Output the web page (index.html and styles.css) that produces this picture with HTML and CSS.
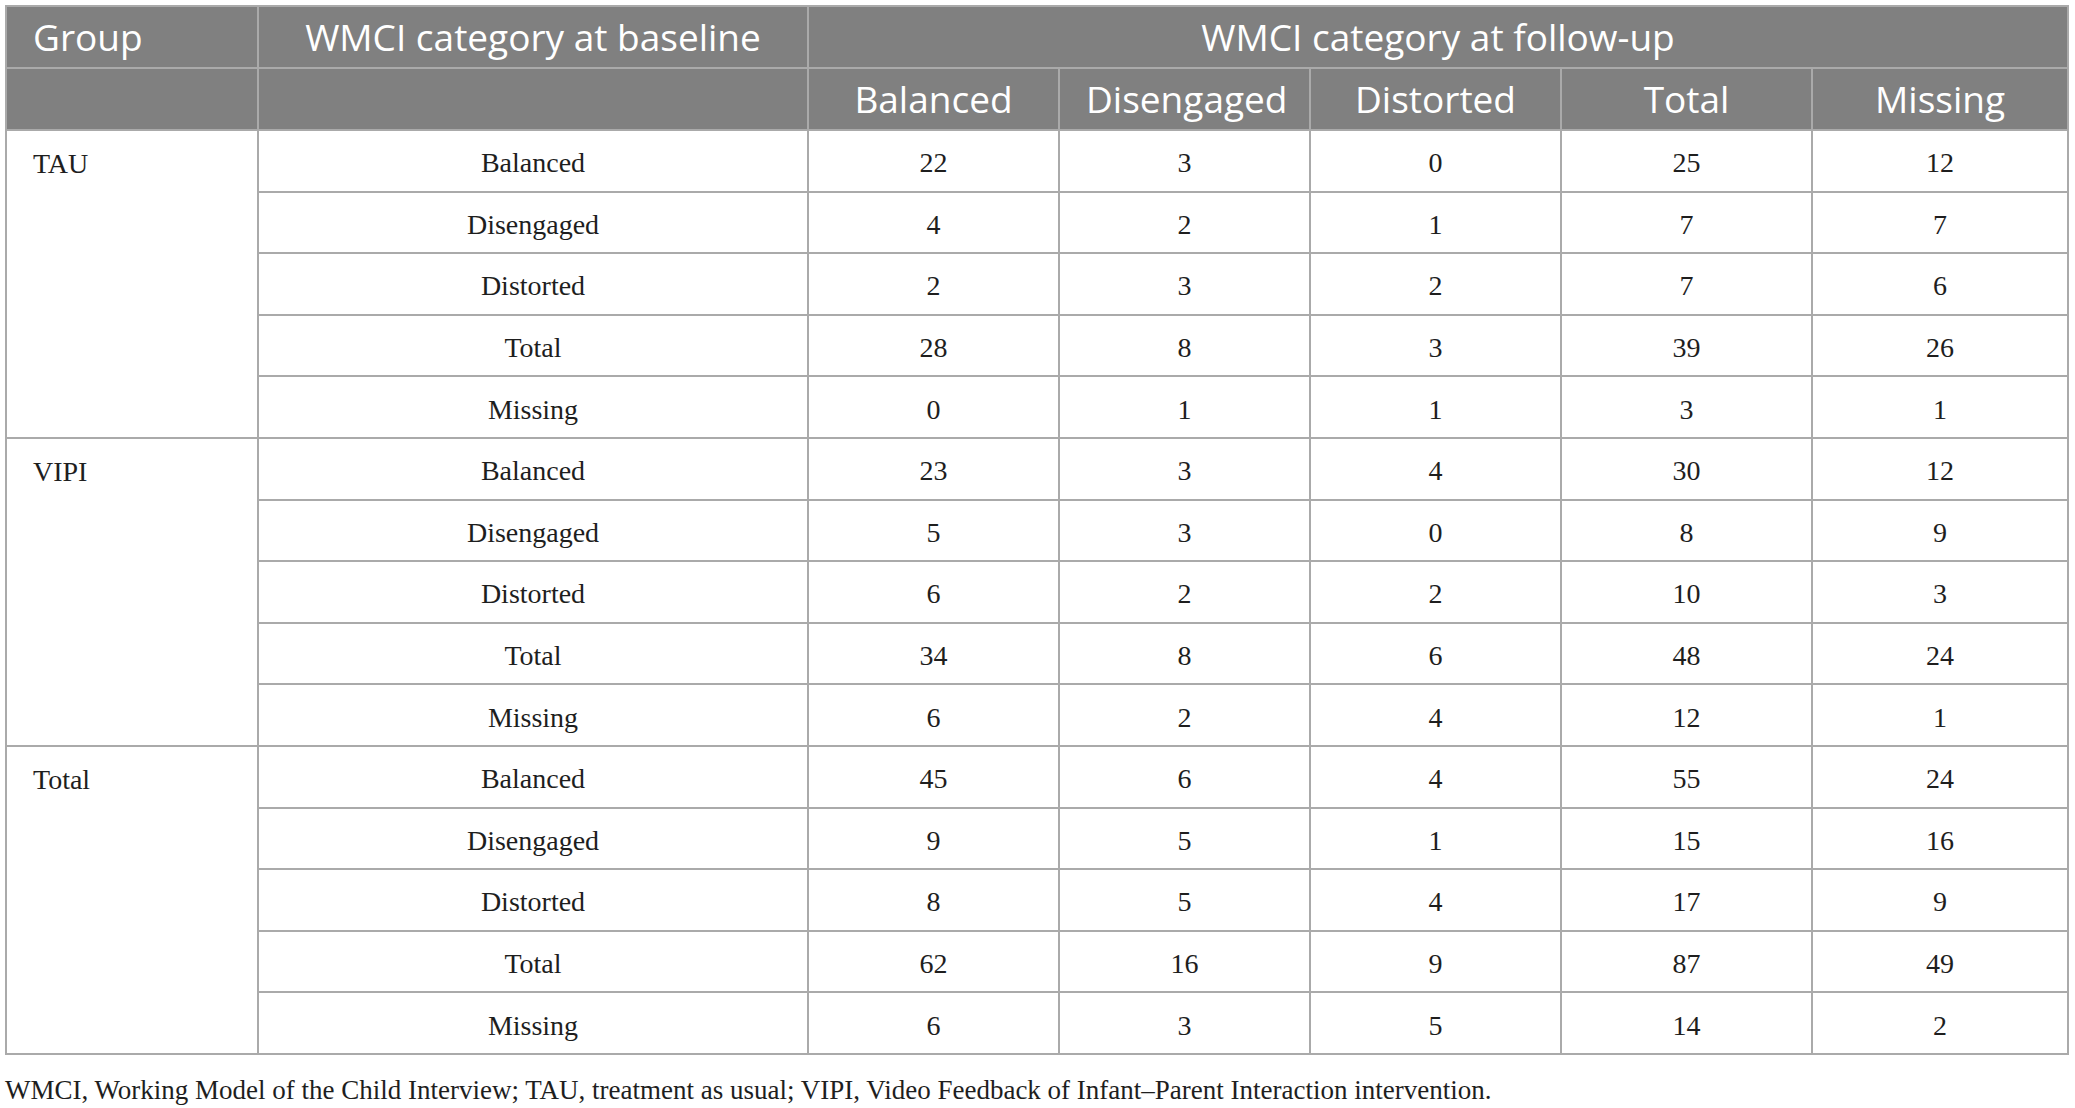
FILE: index.html
```html
<!DOCTYPE html>
<html lang="en">
<head>
<meta charset="UTF-8">
<meta name="viewport" content="width=device-width, initial-scale=1.0">
<title>WMCI categories</title>
<link rel="stylesheet" href="styles.css">
</head>
<body>

<table class="data-table">
    <colgroup>
        <col class="col-group">
        <col class="col-base">
        <col class="col-num">
        <col class="col-num">
        <col class="col-num">
        <col class="col-num">
        <col class="col-last">
    </colgroup>
    <thead>
        <tr>
            <th class="left">Group</th>
            <th>WMCI category at baseline</th>
            <th colspan="5">WMCI category at follow-up</th>
        </tr>
        <tr>
            <th></th>
            <th></th>
            <th>Balanced</th>
            <th>Disengaged</th>
            <th>Distorted</th>
            <th>Total</th>
            <th>Missing</th>
        </tr>
    </thead>
    <tbody id="table-body"></tbody>
</table>

<p class="note">WMCI, Working Model of the Child Interview; TAU, treatment as usual; VIPI, Video Feedback of Infant–Parent Interaction intervention.</p>

<script>
    var groups = [
        { name: 'TAU', rows: [
            ['Balanced', 22, 3, 0, 25, 12],
            ['Disengaged', 4, 2, 1, 7, 7],
            ['Distorted', 2, 3, 2, 7, 6],
            ['Total', 28, 8, 3, 39, 26],
            ['Missing', 0, 1, 1, 3, 1]
        ]},
        { name: 'VIPI', rows: [
            ['Balanced', 23, 3, 4, 30, 12],
            ['Disengaged', 5, 3, 0, 8, 9],
            ['Distorted', 6, 2, 2, 10, 3],
            ['Total', 34, 8, 6, 48, 24],
            ['Missing', 6, 2, 4, 12, 1]
        ]},
        { name: 'Total', rows: [
            ['Balanced', 45, 6, 4, 55, 24],
            ['Disengaged', 9, 5, 1, 15, 16],
            ['Distorted', 8, 5, 4, 17, 9],
            ['Total', 62, 16, 9, 87, 49],
            ['Missing', 6, 3, 5, 14, 2]
        ]}
    ];

    var html = '';
    for (var g = 0; g < groups.length; g++) {
        var rows = groups[g].rows;
        for (var i = 0; i < rows.length; i++) {
            html += '<tr>';
            if (i === 0) {
                html += '<td class="group" rowspan="' + rows.length + '">' + groups[g].name + '</td>';
            }
            for (var j = 0; j < rows[i].length; j++) {
                html += '<td>' + rows[i][j] + '</td>';
            }
            html += '</tr>';
        }
    }
    document.getElementById('table-body').innerHTML = html;
</script>

</body>
</html>
```

FILE: styles.css
```css
body {
    margin: 0;
    padding: 5px;
    background-color: #fff;
    font-family: "Liberation Serif", "Times New Roman", serif;
    color: #1e1e1e;
}

.data-table {
    width: 2064px;
    border-collapse: collapse;
    table-layout: fixed;
}

.col-group { width: 252px; }
.col-base { width: 550px; }
.col-num { width: 251px; }
.col-last { width: 256px; }

.data-table th,
.data-table td {
    border: 2px solid #aaa;
    text-align: center;
    padding: 0 26px;
}

.data-table th {
    height: 60px;
    background-color: #808080;
    color: #fff;
    font-family: "Open Sans", sans-serif;
    font-weight: 400;
    font-size: 37px;
    line-height: 40px;
}

.data-table th.left {
    text-align: left;
}

.data-table td {
    height: 54.6px;
    font-size: 28px;
    line-height: 30px;
    padding-top: 5px;
}

.data-table td.group {
    text-align: left;
    vertical-align: top;
    padding-top: 18px;
}

.note {
    margin: 20px 0 0;
    font-size: 27px;
    line-height: 30px;
}
```
